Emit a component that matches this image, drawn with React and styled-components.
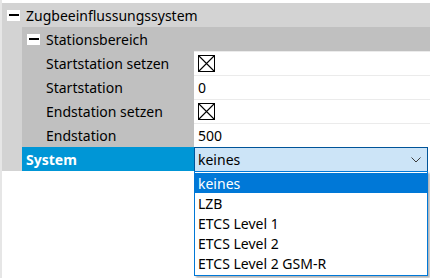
import styled, { createGlobalStyle } from "styled-components";

const GlobalStyle = createGlobalStyle`
  html, body {
    margin: 0;
    padding: 0;
    background: #ffffff;
  }
  body {
    font-family: "Noto Sans", "Open Sans", sans-serif;
    font-size: 14px;
    color: #000000;
  }
`;

const options = ["keines", "LZB", "ETCS Level 1", "ETCS Level 2", "ETCS Level 2 GSM-R"];

const rows = [
  { label: "Startstation setzen", checked: true },
  { label: "Startstation", value: "0" },
  { label: "Endstation setzen", checked: true },
  { label: "Endstation", value: "500" },
];

const Minus = () => (
  <StyledMinus>
    <span />
  </StyledMinus>
);

const Checkbox = () => (
  <StyledCheck viewBox="0 0 17 17">
    <rect x="0.5" y="0.5" width="16" height="16" fill="#fff" stroke="#000" />
    <path d="M1 1 L16 16 M16 1 L1 16" stroke="#000" strokeWidth="1.1" />
  </StyledCheck>
);

const Chevron = () => (
  <svg width="10" height="6" viewBox="0 0 10 6">
    <path d="M0.5 0.5 L5 5 L9.5 0.5" fill="none" stroke="#3c3c3c" strokeWidth="1" />
  </svg>
);

const App = () => {
  return (
    <StyledPage>
      <GlobalStyle />
      <StyledGrid>
        <StyledGroupHeader>
          <Minus />
          <span>Zugbeeinflussungssystem</span>
        </StyledGroupHeader>
        <StyledGroupBody>
          <StyledSubHeader>
            <Minus />
            <span>Stationsbereich</span>
          </StyledSubHeader>
          {rows.map((row) => (
            <StyledRow key={row.label}>
              <StyledLabel>{row.label}</StyledLabel>
              <StyledValue>{row.checked ? <Checkbox /> : row.value}</StyledValue>
            </StyledRow>
          ))}
          <StyledRow>
            <StyledLabel $active>System</StyledLabel>
            <StyledValue $plain>
              <StyledCombo>
                <span>keines</span>
                <Chevron />
                <StyledList>
                  {options.map((opt, i) => (
                    <StyledOption key={opt} $selected={i === 0}>
                      {opt}
                    </StyledOption>
                  ))}
                </StyledList>
              </StyledCombo>
            </StyledValue>
          </StyledRow>
        </StyledGroupBody>
      </StyledGrid>
    </StyledPage>
  );
};

const StyledPage = styled.div`
  width: 430px;
  height: 278px;
  padding-top: 3px;
  box-sizing: border-box;
  border-left: 2px solid #e6e6e6;
  overflow: hidden;
`;
const StyledGrid = styled.div`
  display: flex;
  flex-direction: column;
  margin-left: -2px;
`;
const StyledGroupHeader = styled.div`
  height: 24px;
  display: flex;
  align-items: center;
  background: #d3d3d3;
  padding-left: 7px;
  gap: 6px;
`;
const StyledGroupBody = styled.div`
  display: flex;
  flex-direction: column;
  background: #d3d3d3;
  padding-left: 22px;
`;
const StyledSubHeader = styled.div`
  height: 24px;
  display: flex;
  align-items: center;
  background: #c0c0c0;
  padding-left: 5px;
  gap: 6px;
`;
const StyledMinus = styled.div`
  width: 13px;
  height: 11px;
  background: #ffffff;
  display: flex;
  align-items: center;
  justify-content: center;
  span {
    width: 10px;
    height: 2px;
    background: #000000;
  }
`;
const StyledRow = styled.div`
  height: 24px;
  display: flex;
`;
const StyledLabel = styled.div`
  width: 172px;
  flex: none;
  display: flex;
  align-items: center;
  padding-left: ${(props) => (props.$active ? "4px" : "24px")};
  box-sizing: border-box;
  background: ${(props) => (props.$active ? "#0096d6" : "#c0c0c0")};
  color: ${(props) => (props.$active ? "#ffffff" : "#000000")};
  font-weight: ${(props) => (props.$active ? "bold" : "normal")};
`;
const StyledValue = styled.div`
  flex: 1;
  display: flex;
  align-items: center;
  padding-left: ${(props) => (props.$plain ? "0" : "4px")};
  box-sizing: border-box;
  background: #ffffff;
  border-top: ${(props) => (props.$plain ? "none" : "1px solid #ebebeb")};
`;
const StyledCheck = styled.svg`
  width: 17px;
  height: 17px;
  display: block;
`;
const StyledCombo = styled.div`
  position: relative;
  width: 234px;
  height: 25px;
  margin-top: 1px;
  box-sizing: border-box;
  border: 1px solid #005499;
  background: #cce4f7;
  display: flex;
  align-items: center;
  justify-content: space-between;
  padding: 0 6px 0 3px;
`;
const StyledList = styled.div`
  position: absolute;
  top: 100%;
  left: -1px;
  width: 234px;
  box-sizing: border-box;
  border: 1px solid #0078d7;
  background: #ffffff;
  padding: 1px 0 2px;
  box-shadow: 2px 2px 2px rgba(0, 0, 0, 0.3);
`;
const StyledOption = styled.div`
  height: 20px;
  line-height: 22px;
  padding-left: 3px;
  background: ${(props) => (props.$selected ? "#0078d7" : "transparent")};
  color: ${(props) => (props.$selected ? "#ffffff" : "#000000")};
`;

export default App;
